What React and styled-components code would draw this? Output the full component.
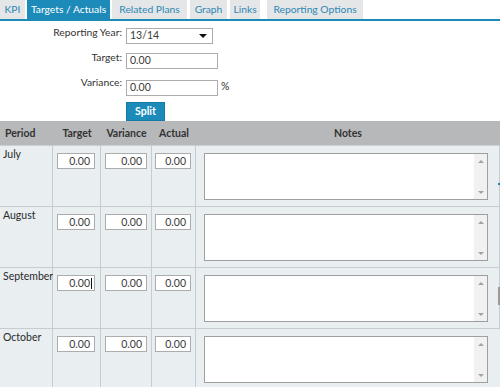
import React from 'react'
import styled, { createGlobalStyle } from 'styled-components';

const GlobalStyle = createGlobalStyle`
    body {
        margin: 0;
        background: #FFFFFF;
        font-family: Lato, "DejaVu Sans", sans-serif;
        font-size: 10px;
        line-height: 1.2;
        color: #333333;
    }
`;

const Page = styled.div`
    width : 500px;
    height : 387px;
    overflow : hidden;
    position : relative;
`;

const TabBar = styled.div`
    display : flex;
    height : 19px;
    border-bottom : 2px solid #1c8ab7;
`;

const Tab = styled.div`
    display : flex;
    align-items : center;
    justify-content : center;
    width : ${p => p.$w}px;
    margin-right : ${p => p.$gap ?? 2}px;
    background : ${p => p.$active ? '#1d8bb9' : '#e4e6e7'};
    color : ${p => p.$active ? '#FFFFFF' : '#2f87b5'};
    font-size : 10.3px;
    white-space : nowrap;
`;

const Form = styled.div`
    display : grid;
    grid-template-columns: 122px auto;
    column-gap : 4px;
    row-gap : 8px;
    align-items : center;
    padding-top : 6px;
    height : 100px;
    box-sizing : border-box;
`;

const Label = styled.div`
    text-align : right;
    font-size : 10.3px;
    color : #333333;
    align-self : start;
    margin-top : -1px;
`;

const Field = styled.div`
    display : flex;
    align-items : center;
    gap : 3px;
    font-size : 10.5px;
`;

const Box = styled.div`
    width : ${p => p.$w}px;
    height : 16px;
    box-sizing : border-box;
    border : 1px solid #abacad;
    background : #FFFFFF;
    display : flex;
    align-items : center;
    justify-content : ${p => p.$right ? 'flex-end' : 'space-between'};
    padding : 0 4px 0 3px;
    font-size : 10.5px;
    color : #3a3a3a;
    margin-top : ${p => p.$mt || 0}px;
`;

const Caret = styled.span`
    width : 1px;
    height : 11px;
    background : #111111;
    margin-left : 1px;
    margin-right : -2px;
`;

const Arrow = styled.span`
    width : 0;
    height : 0;
    border-left : 4px solid transparent;
    border-right : 4px solid transparent;
    border-top : 4px solid #111111;
    margin-right : 1px;
`;

const SplitButton = styled.div`
    width : 39px;
    height : 19px;
    background : #1d8bb9;
    border : 1px solid #167aa4;
    box-sizing : border-box;
    color : #FFFFFF;
    font-weight : 700;
    font-size : 10.5px;
    display : flex;
    align-items : center;
    justify-content : center;
    margin-top : -3px;
`;

const Grid = styled.div`
    display : grid;
    grid-template-columns: 53px 48px 51px 44px 1fr;
    grid-auto-rows : 61px;
    grid-template-rows : 25px;
`;

const HeadCell = styled.div`
    background : #b7b8b9;
    font-weight : 700;
    font-size : 10.5px;
    color : #333333;
    display : flex;
    align-items : center;
    justify-content : ${p => p.$left ? 'flex-start' : 'center'};
    padding-left : ${p => p.$left ? 5 : 0}px;
    border-bottom : 1px solid #c9cfd3;
`;

const Cell = styled.div`
    background : #e9eef1;
    border-right : 1px solid #c6ccd0;
    border-bottom : 1px solid #c6ccd0;
    padding : ${p => p.$pad || '7px 0 0 4px'};
    box-sizing : border-box;
    font-size : 10.5px;
    color : #2a2a2a;
    &:last-child { border-right : none; }
`;

const PeriodName = styled.div`
    margin-top : -5px;
    margin-left : -1px;
`;

const NoteBox = styled.div`
    width : 284px;
    height : 47px;
    box-sizing : border-box;
    border : 1px solid #9e9fa0;
    background : #FFFFFF;
    display : flex;
    justify-content : flex-end;
`;

const Scroll = styled.div`
    width : 13px;
    background : #f1f1f1;
    display : flex;
    flex-direction : column;
    justify-content : space-between;
    align-items : center;
    padding : 6px 0 5px;
`;

const Tri = styled.span`
    width : 0;
    height : 0;
    border-left : 3px solid transparent;
    border-right : 3px solid transparent;
    ${p => p.$up ? 'border-bottom : 3px solid #a3a3a3;' : 'border-top : 3px solid #a3a3a3;'}
`;

const EdgeMark = styled.div`
    position : absolute;
    right : 0;
    top : ${p => p.$top}px;
    width : ${p => p.$w}px;
    height : ${p => p.$h}px;
    background : ${p => p.$c};
`;

const periods = ['July', 'August', 'September', 'October'];

function Notes(){
    return <NoteBox>
                <Scroll>
                    <Tri $up />
                    <Tri />
                </Scroll>
            </NoteBox>
}

export default function App(){
    return <Page>
                <GlobalStyle />
                <TabBar>
                    <Tab $w={25}>KPI</Tab>
                    <Tab $w={83} $active>Targets / Actuals</Tab>
                    <Tab $w={75} $gap={3}>Related Plans</Tab>
                    <Tab $w={37} $gap={3}>Graph</Tab>
                    <Tab $w={30} $gap={7}>Links</Tab>
                    <Tab $w={96}>Reporting Options</Tab>
                </TabBar>
                <Form>
                    <Label>Reporting Year:</Label>
                    <Field><Box $w={87}>13/14<Arrow /></Box></Field>
                    <Label>Target:</Label>
                    <Field><Box $w={92}>0.00</Box></Field>
                    <Label>Variance:</Label>
                    <Field><Box $w={92} $mt={2}>0.00</Box>%</Field>
                    <div />
                    <Field><SplitButton>Split</SplitButton></Field>
                </Form>
                <Grid>
                    <HeadCell $left>Period</HeadCell>
                    <HeadCell>Target</HeadCell>
                    <HeadCell>Variance</HeadCell>
                    <HeadCell>Actual</HeadCell>
                    <HeadCell>Notes</HeadCell>
                    {periods.map(name => (
                        <React.Fragment key={name}>
                            <Cell $pad="7px 0 0 4px"><PeriodName>{name}</PeriodName></Cell>
                            <Cell $pad="7px 0 0 4px">
                                <Box $w={38} $right>0.00{name === 'September' && <Caret />}</Box>
                            </Cell>
                            <Cell $pad="7px 0 0 4px"><Box $w={42} $right>0.00</Box></Cell>
                            <Cell $pad="7px 0 0 3px"><Box $w={36} $right>0.00</Box></Cell>
                            <Cell $pad="7px 0 0 8px"><Notes /></Cell>
                        </React.Fragment>
                    ))}
                </Grid>
                <EdgeMark $top={183} $w={2} $h={2} $c="#2b7fa8" />
                <EdgeMark $top={287} $w={2} $h={18} $c="#9a9a9a" />
            </Page>
}
